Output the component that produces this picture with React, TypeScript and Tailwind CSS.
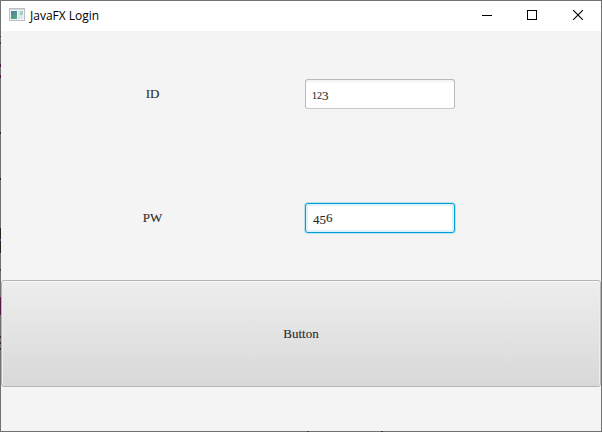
import React from 'react';

const serif = "font-['Liberation_Serif',serif] text-[#2b2b2b] [-webkit-text-stroke:0.12px_#333333]";

/* Coloured stretches of the one-pixel window edge, top offset and height. */
const edgeMarks: { top: number; height: number; color: string }[] = [
  { top: 36, height: 1, color: '#383838' },
  { top: 42, height: 2, color: '#383838' },
  { top: 64, height: 3, color: '#4b1440' },
  { top: 75, height: 3, color: '#4b1440' },
  { top: 132, height: 2, color: '#33202b' },
  { top: 178, height: 2, color: '#202020' },
  { top: 228, height: 11, color: '#2a2322' },
  { top: 239, height: 2, color: '#3c5b86' },
  { top: 241, height: 12, color: '#2a2322' },
  { top: 269, height: 2, color: '#513d30' },
  { top: 297, height: 18, color: '#541a48' },
  { top: 336, height: 2, color: '#3f2c2c' },
  { top: 342, height: 2, color: '#3f2c2c' },
  { top: 348, height: 2, color: '#3f2c2c' },
];

function TitleBar() {
  return (
    <header className="flex h-[30px] shrink-0 items-start bg-white">
      <svg className="ml-2 mt-[7px] shrink-0" width="16" height="14" viewBox="0 0 16 14" shapeRendering="crispEdges">
        <defs>
          <linearGradient id="pane" x1="0" y1="0" x2="0.6" y2="1">
            <stop offset="0" stopColor="#4f7fa5" />
            <stop offset="1" stopColor="#55a585" />
          </linearGradient>
        </defs>
        <rect x="0.5" y="0.5" width="15" height="12" fill="#f4f5f6" stroke="#bcc0c6" />
        <rect x="1" y="1" width="14" height="1" fill="#d5d9df" />
        <rect x="2" y="3" width="6" height="8" fill="url(#pane)" />
        <rect x="9" y="3" width="2" height="8" fill="#dde5ec" />
        <rect x="11" y="3" width="3" height="4" fill="#a9cfc4" />
        <rect x="11" y="7" width="3" height="4" fill="#dfe7ec" />
      </svg>
      <h1 className="ml-[5px] mt-[7px] whitespace-nowrap font-['Open_Sans',sans-serif] text-[12px] leading-[16px] text-black">
        JavaFX Login
      </h1>
      <div className="ml-auto flex">
        <button aria-label="Minimize" className="flex h-[28px] w-[46px] items-center justify-center">
          <svg width="10" height="10" shapeRendering="crispEdges"><path d="M0 5.5H10" stroke="#000" /></svg>
        </button>
        <button aria-label="Maximize" className="flex h-[28px] w-[44px] items-center justify-center">
          <svg width="10" height="10" shapeRendering="crispEdges"><path d="M.5 .5H9.5V9.5H.5Z" fill="none" stroke="#000" /></svg>
        </button>
        <button aria-label="Close" className="flex h-[28px] w-[47px] items-center justify-center">
          <svg width="10" height="10"><path d="M0 0L10 10M10 0L0 10" stroke="#000" strokeWidth="1.1" /></svg>
        </button>
      </div>
    </header>
  );
}

export default function App() {
  return (
    <div className="relative flex h-[432px] w-[602px] flex-col border border-[#727272] bg-[#f4f4f4]">
      {edgeMarks.map((m) => (
        <i key={m.top} className="absolute -left-px w-px" style={{ top: m.top - 1, height: m.height, background: m.color }} />
      ))}
      <i className="absolute -bottom-px left-[306px] h-px w-[2px] bg-[#3a3a5c]" />
      <i className="absolute -bottom-px left-[380px] h-px w-[2px] bg-[#2f3a38]" />
      <TitleBar />
      <main className="flex flex-1 flex-col">
        <div className="mt-[48px] flex h-[30px] items-center">
          <label className={`${serif} w-[303px] text-center text-[13px] leading-[16px]`}>ID</label>
          <div className="ml-px flex h-[30px] w-[150px] items-center rounded-[3px] border border-[#b9b9b9] border-b-[#c8c8c8] bg-white bg-linear-to-b from-[#f2f2f2] to-white to-[4px] pl-[6px] pt-px">
            <span className={`${serif} flex items-baseline text-[13px] leading-[16px]`}>
              <span className="relative top-px inline-block w-[5px] text-[10px]">1</span>
              <span className="relative top-px inline-block w-[5px] text-[10px]">2</span>
              <span className="relative top-[2px]">3</span>
            </span>
          </div>
        </div>
        <div className="mt-[94px] flex h-[30px] items-center">
          <label className={`${serif} w-[303px] text-center text-[13px] leading-[16px]`}>PW</label>
          <div className="ml-px flex h-[30px] w-[150px] items-center rounded-[3px] border border-[#039ed3] bg-white pl-[7px] shadow-[0_0_0_1px_#b9e1ef,inset_0_0_0_2px_#dff2f9]">
            <span className={`${serif} flex text-[13px] leading-[16px]`}>
              <span className="relative top-[2px]">4</span>
              <span className="relative top-[2px]">5</span>
              <span>6</span>
            </span>
          </div>
        </div>
        <button className={`${serif} mt-[47px] h-[107px] w-[600px] rounded-[3px] border border-[#b5b5b5] bg-linear-to-b from-[#eeeeee] to-[#d8d8d8] text-[13px] leading-[16px] shadow-[inset_0_1px_0_#fafafa,inset_1px_0_0_#eeeeee,inset_-1px_0_0_#eeeeee]`}>
          Button
        </button>
      </main>
    </div>
  );
}
